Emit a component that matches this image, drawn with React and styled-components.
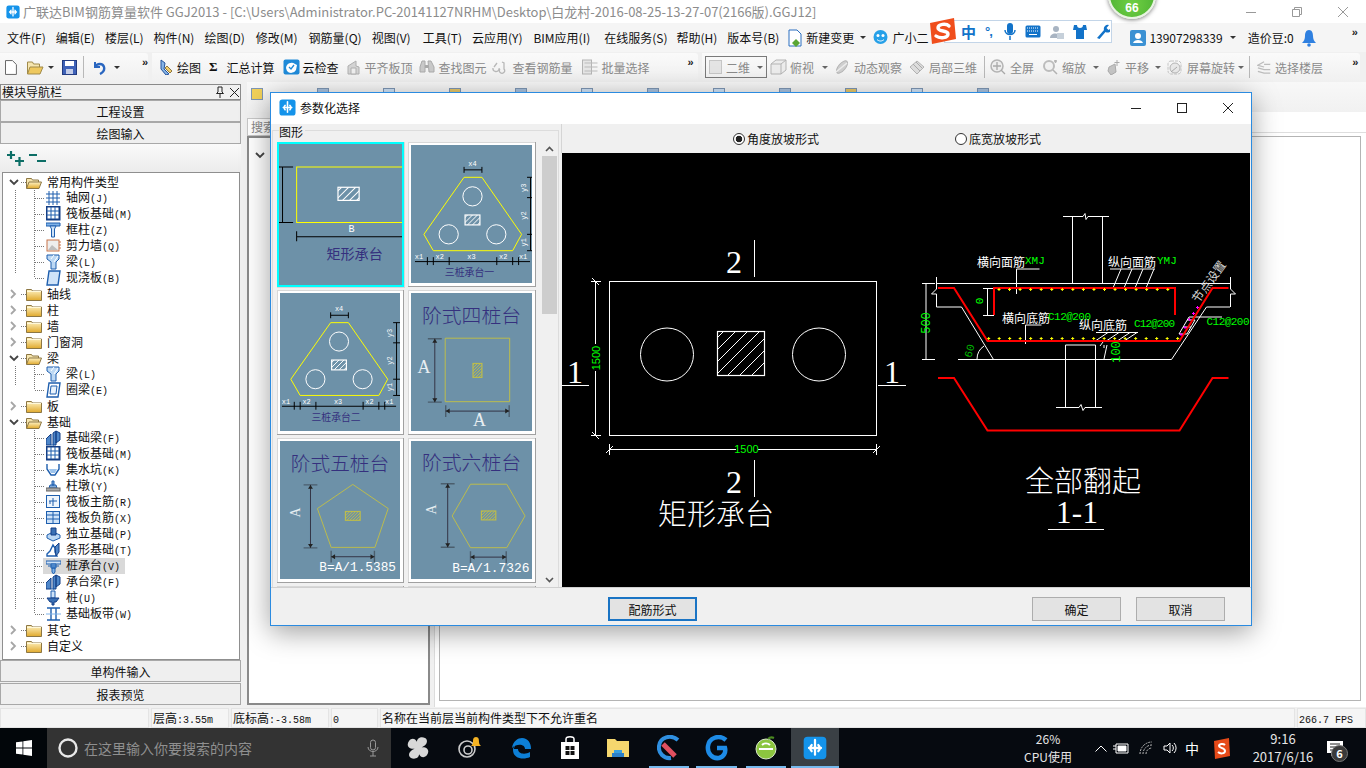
import React from "react";
import styled, { createGlobalStyle } from "styled-components";

const SANS = `"Noto Sans CJK SC", "Noto Sans", sans-serif`;
const MONO = `"Liberation Mono", "Noto Sans CJK SC", monospace`;
const SERIF = `"Liberation Serif", serif`;

const GlobalStyle = createGlobalStyle`
  html, body { margin: 0; padding: 0; overflow: hidden; background: #f0f0f0; }
  body { font-family: ${SANS}; font-size: 12px; color: #111; }
`;

const Screen = styled.div`
  position: relative;
  width: 1366px;
  height: 768px;
  overflow: hidden;
  display: flex;
  flex-direction: column;
  background: #f0f0f0;
`;

/* title bar */
const TitleBar = styled.div`
  height: 23px;
  background: #fff;
  display: flex;
  align-items: center;
  padding-left: 6px;
  gap: 3px;
  color: #8c8c8c;
  line-height: 1;
`;
const TitleText = styled.span`
  flex: 1;
  white-space: nowrap;
  font-size: 13px;
`;
const WinButtons = styled.div`
  display: flex;
  align-items: center;
`;
const WinButton = styled.div`
  width: 46px;
  height: 20px;
  display: flex;
  align-items: center;
  justify-content: center;
`;

/* menu */
const MenuBar = styled.div`
  height: 29px;
  background: #f5f5f5;
  display: flex;
  align-items: center;
  padding-left: 7px;
  white-space: nowrap;
`;
const MenuItem = styled.span`
  margin-left: ${(p) => p.$ml ?? 10}px;
  display: inline-flex;
  align-items: center;
  gap: 3px;
  color: #111;
`;

/* tool bar */
const ToolBar = styled.div`
  height: 30px;
  background: #f0f0f0;
  display: flex;
  align-items: center;
  gap: 4px;
  white-space: nowrap;
`;
const ToolBand = styled.div`
  width: ${(p) => p.$w}px;
  height: 29px;
  display: flex;
  align-items: center;
  background: linear-gradient(#fafafa, #f0f0f0);
  border-radius: 0 3px 3px 0;
  padding-left: ${(p) => p.$pad || 0}px;
  box-sizing: border-box;
`;
const ToolItem = styled.span`
  margin-left: ${(p) => p.$ml || 0}px;
  display: inline-flex;
  align-items: center;
  gap: ${(p) => p.$gap ?? 3}px;
  color: ${(p) => (p.$off ? "#8a8a8a" : "#111")};
`;
const Sigma = styled.strong`
  font-family: ${SERIF};
  font-size: 13px;
`;
const ToolSep = styled.span`
  width: 1px;
  height: 22px;
  margin-left: ${(p) => p.$ml || 0}px;
  background: #b8b8b8;
`;
const Caret = styled.span`
  margin-left: ${(p) => p.$ml || 0}px;
  width: 0;
  height: 0;
  border-left: 3px solid transparent;
  border-right: 3px solid transparent;
  border-top: 3px solid ${(p) => p.$color || "#333"};
`;
const More = styled.span`
  margin-left: ${(p) => p.$ml || 0}px;
  font-family: "Liberation Sans", sans-serif;
  font-weight: 700;
  font-size: 11px;
  line-height: 1;
  margin-top: -10px;
  color: #222;
`;
const Combo = styled.div`
  margin-left: ${(p) => p.$ml || 0}px;
  width: 62px;
  height: 22px;
  box-sizing: border-box;
  border: 1px solid #7a7a7a;
  display: flex;
  align-items: center;
  padding: 0 3px;
  gap: 4px;
  color: #8a8a8a;
`;
const ComboSwatch = styled.span`
  width: 13px;
  height: 12px;
  background: #e4e4e4;
  border: 1px solid #c6c6c6;
`;

/* main row */
const Main = styled.div`
  height: 626px;
  display: flex;
`;

/* module nav */
const Nav = styled.div`
  width: 241px;
  padding-top: 2px;
  box-sizing: border-box;
  display: flex;
  flex-direction: column;
  flex: none;
`;
const NavTitle = styled.div`
  height: 14px;
  border: 1px solid #8a8a8a;
  display: flex;
  align-items: center;
  padding: 0 1px;
  font-size: 12px;
  line-height: 1;
  gap: 5px;
  flex: none;
`;
const NavTitleText = styled.span`
  flex: 1;
`;
const NavButton = styled.div`
  height: 20px;
  margin-top: ${(p) => p.$mt ?? 0}px;
  border: 1px solid #a8a8a8;
  background: #efefef;
  display: flex;
  align-items: center;
  justify-content: center;
  font-size: 12px;
  flex: none;
`;
const TreeTools = styled.div`
  height: 28px;
  display: flex;
  align-items: center;
  padding-left: 7px;
  gap: 5px;
  background: linear-gradient(#fafafa, #ececec);
  flex: none;
`;
const Tree = styled.div`
  height: 488px;
  margin: 0 1px 0 2px;
  border: 1px solid #8f8f8f;
  background: #fff;
  padding-top: 1px;
  box-sizing: border-box;
  overflow: hidden;
  flex: none;
`;
const TreeGroup = styled.div`
  background: ${(p) =>
    p.$open
      ? "repeating-linear-gradient(#777 0 1px, transparent 1px 2px) 12px 12px / 1px calc(100% - 24px) no-repeat"
      : "none"};
`;
const GroupRow = styled.div`
  height: 16px;
  display: flex;
  align-items: center;
  padding-left: 5px;
  font-size: 12px;
  line-height: 16px;
`;
const Expander = styled.span`
  width: 11px;
  height: 16px;
  display: flex;
  align-items: center;
  justify-content: center;
  background: #fff;
`;
const Dots = styled.span`
  width: 5px;
  margin-left: 2px;
  height: 1px;
  background: repeating-linear-gradient(90deg, #777 0 1px, transparent 1px 2px);
`;
const GroupLabel = styled.span`
  margin-left: 5px;
`;
const ChildRow = styled.div`
  height: 16px;
  display: flex;
  align-items: center;
  padding-left: 40px;
  background:
    repeating-linear-gradient(#777 0 1px, transparent 1px 2px) 31px 0 / 1px ${(p) => (p.$last ? "8px" : "16px")} no-repeat,
    repeating-linear-gradient(90deg, #777 0 1px, transparent 1px 2px) 32px 8px / 10px 1px no-repeat;
`;
const ChildBody = styled.span`
  display: inline-flex;
  align-items: center;
  gap: 5px;
  height: 16px;
  line-height: 16px;
  padding: 0 5px 0 3px;
  background: ${(p) => (p.$selected ? "#d9d9d9" : "transparent")};
  font-size: 12px;
  white-space: nowrap;
`;
const Code = styled.span`
  font-family: ${MONO};
  font-size: 10px;
`;

/* work area behind dialog */
const Work = styled.div`
  flex: 1;
  padding-left: 6px;
  display: flex;
  flex-direction: column;
  min-width: 0;
`;
const TabStrip = styled.div`
  height: 30px;
  display: flex;
  gap: 54px;
  align-items: flex-start;
  padding: 6px 0 0 4px;
  box-sizing: border-box;
  background: linear-gradient(#f8f8f8, #f1f1f1);
  flex: none;
`;
const TabIcon = styled.span`
  width: 10px;
  height: 10px;
  background: ${(p) => p.$color};
  border: 1px solid #7f97b5;
`;
const Panes = styled.div`
  flex: 1;
  display: flex;
  gap: 4px;
  min-height: 0;
`;
const ListPane = styled.div`
  width: 183px;
  padding: 6px 0 3px;
  box-sizing: border-box;
  display: flex;
  flex-direction: column;
`;
const SearchBox = styled.div`
  height: 16px;
  border: 1px solid #c8c8c8;
  background: #fff;
  padding-left: 3px;
  color: #888;
  line-height: 16px;
  flex: none;
`;
const ListBody = styled.div`
  flex: 1;
  border: 2px solid #8a8a8a;
  background: #fff;
  padding: 7px 0 0 6px;
`;
const ViewPane = styled.div`
  flex: 1;
  background: #fff;
  display: flex;
  flex-direction: column;
  padding: 20px 5px 6px 4px;
  margin-bottom: 1px;
  border-left: 1px solid #dcdcdc;
  box-sizing: border-box;
`;
const ViewRule = styled.div`
  height: 1px;
  background: #dedede;
  margin: 0 -5px 3px -4px;
  flex: none;
`;
const ViewInner = styled.div`
  flex: 1;
  border: 1px solid #b4b4b4;
`;

/* status bar */
const StatusBar = styled.div`
  height: 20px;
  display: flex;
  gap: 2px;
  background: #f0f0f0;
  box-sizing: border-box;
  flex: none;
`;
const StatusCell = styled.div`
  width: ${(p) => p.$w}px;
  flex: ${(p) => (p.$grow ? 1 : "none")};
  background: #f5f5f5;
  border: 1px solid #e4e4e4;
  box-sizing: border-box;
  padding-left: 1px;
  line-height: 18px;
  font-size: 12px;
  white-space: nowrap;
`;

/* task bar */
const TaskBar = styled.div`
  height: 40px;
  background: #060a10;
  display: flex;
  align-items: stretch;
  color: #fff;
  flex: 1;
`;
const StartButton = styled.div`
  width: 47px;
  display: flex;
  align-items: center;
  justify-content: center;
  background: #02060a;
  flex: none;
`;
const SearchPill = styled.div`
  width: 344px;
  background: #333;
  display: flex;
  align-items: center;
  padding: 0 12px 0 10px;
  gap: 5px;
  color: #8f8f8f;
  font-size: 14px;
  box-sizing: border-box;
  flex: none;
`;
const SearchHint = styled.span`
  flex: 1;
`;
const TaskIcons = styled.div`
  display: flex;
  margin-left: 2px;
`;
const TaskSlot = styled.div`
  width: ${(p) => p.$w || 50}px;
  margin-left: ${(p) => p.$ml || 0}px;
  display: flex;
  align-items: center;
  justify-content: center;
  background: ${(p) => (p.$active ? "#3a4045" : "transparent")};
  box-sizing: border-box;
  border-bottom: 2px solid ${(p) => (p.$run ? "#76b9ed" : "transparent")};
  border-top: 2px solid transparent;
`;
const Tray = styled.div`
  margin-left: auto;
  display: flex;
  align-items: center;
`;
const Stacked = styled.div`
  width: ${(p) => p.$w}px;
  margin-left: ${(p) => p.$ml || 0}px;
  margin-right: ${(p) => p.$mr || 0}px;
  text-align: center;
  font-size: ${(p) => p.$size || 12}px;
  line-height: 18px;
  color: #e6e6e6;
  white-space: nowrap;
`;
const TrayIcon = styled.span`
  width: ${(p) => p.$w || 24}px;
  display: flex;
  justify-content: center;
  align-items: center;
  font-size: ${(p) => p.$size || 13}px;
  color: #fff;
`;
const BadgeWrap = styled.span`
  position: relative;
  width: 42px;
  height: 24px;
  display: flex;
  align-items: center;
  justify-content: center;
  margin-right: 10px;
`;
const CountBadge = styled.span`
  position: absolute;
  right: 8px;
  bottom: -2px;
  width: 15px;
  height: 15px;
  border-radius: 50%;
  background: #3a3a3a;
  border: 1px solid #777;
  font-size: 11px;
  font-weight: 700;
  display: flex;
  align-items: center;
  justify-content: center;
  line-height: 1;
`;

/* floating bits */
const GreenBall = styled.div`
  position: absolute;
  left: 1108px;
  top: -29px;
  width: 44px;
  height: 44px;
  border-radius: 50%;
  background: radial-gradient(circle at 50% 70%, #6fcf43, #3ea52c);
  border: 2px solid #e9f3e3;
  box-shadow: 0 1px 4px rgba(0, 0, 0, 0.5);
  display: flex;
  align-items: flex-end;
  justify-content: center;
  color: #fff;
  font-weight: 700;
  font-size: 12px;
  line-height: 17px;
  font-family: "Liberation Sans", sans-serif;
`;
const SogouBar = styled.div`
  position: absolute;
  left: 944px;
  top: 20px;
  width: 168px;
  height: 23px;
  background: #fff;
  border: 1px solid #c3d5e8;
  box-sizing: border-box;
  display: flex;
  align-items: center;
  padding-left: 16px;
  gap: 9px;
  color: #1273c9;
  font-weight: 700;
  font-size: 15px;
`;
const SogouMarks = styled.span`
  width: 10px;
  font-size: 13px;
  letter-spacing: -1px;
  font-family: "Liberation Sans", sans-serif;
`;
const SogouLogo = styled.svg`
  position: absolute;
  left: 929px;
  top: 18px;
`;

/* dialog */
const Dialog = styled.div`
  position: absolute;
  left: 270px;
  top: 92px;
  width: 982px;
  height: 534px;
  box-sizing: border-box;
  border: 1px solid #2b8be0;
  box-shadow: 0 6px 26px rgba(0, 0, 0, 0.38);
  background: #f0f0f0;
  display: flex;
  flex-direction: column;
  z-index: 2;
`;
const DialogTitle = styled.div`
  height: 29px;
  padding: 0 0 2px 8px;
  background: #fff;
  display: flex;
  align-items: center;
  gap: 4px;
  flex: none;
`;
const DialogTitleText = styled.span`
  flex: 1;
  font-size: 12px;
`;
const DialogBody = styled.div`
  height: 463px;
  display: flex;
  flex: none;
  overflow: hidden;
`;
const Shapes = styled.div`
  width: 290px;
  flex: none;
  box-sizing: border-box;
  padding: 6px 2px 0 1px;
  display: flex;
  flex-direction: column;
`;
const ShapeFrame = styled.div`
  position: relative;
  flex: 1;
  border: 1px solid #dcdcdc;
  border-bottom: 0;
  display: flex;
  min-height: 0;
  padding: 11px 1px 0 4px;
`;
const ShapeCaption = styled.span`
  position: absolute;
  left: 6px;
  top: -6px;
  background: #f0f0f0;
  padding-right: 2px;
  font-size: 12px;
  line-height: 14px;
`;
const CardGrid = styled.div`
  width: 262px;
  display: grid;
  grid-template-columns: 127px 128px;
  grid-auto-rows: 145px;
  column-gap: 4px;
  row-gap: 3px;
  overflow: hidden;
  flex: none;
`;
const Card = styled.div`
  box-sizing: border-box;
  padding: ${(p) => (p.$selected ? "2px" : "3px")};
  background: ${(p) => (p.$selected ? "#00ffff" : "#fff")};
  border-right: ${(p) => (p.$selected ? "0" : "1px solid #a0a0a0")};
  border-bottom: ${(p) => (p.$selected ? "0" : "1px solid #a0a0a0")};
  box-shadow: ${(p) => (p.$selected ? "0 0 0 1px #d8d8d8" : "inset 1px 1px 0 #d8d8d8")};
`;
const Thumb = styled.svg`
  display: block;
  width: 100%;
  height: 100%;
  background: #6d91a8;
`;
const ScrollBar = styled.div`
  width: 15px;
  margin-left: 3px;
  display: flex;
  flex-direction: column;
  align-items: center;
  flex: none;
`;
const ScrollArrow = styled.div`
  height: 14px;
  display: flex;
  align-items: center;
  flex: none;
`;
const ScrollThumb = styled.div`
  width: 15px;
  height: 158px;
  background: #cdcdcd;
  flex: none;
`;
const ScrollGap = styled.div`
  flex: 1;
`;
const Preview = styled.div`
  flex: 1;
  display: flex;
  flex-direction: column;
  min-width: 0;
`;
const RadioBar = styled.div`
  height: 29px;
  display: flex;
  align-items: center;
  padding-left: 171px;
  gap: 136px;
  box-sizing: border-box;
  border-left: 1px solid #d5d5d5;
  flex: none;
`;
const RadioLabel = styled.label`
  display: inline-flex;
  align-items: center;
  gap: 2px;
  font-size: 12px;
`;
const RadioDot = styled.span`
  width: 12px;
  height: 12px;
  border-radius: 50%;
  border: 1px solid #333;
  box-sizing: border-box;
  background: ${(p) => (p.$on ? "radial-gradient(circle, #222 0 3px, #fff 3.6px)" : "#fff")};
`;
const Canvas = styled.svg`
  display: block;
  width: 688px;
  height: 434px;
  margin-left: 1px;
  background: #000;
`;
const DialogFooter = styled.div`
  flex: 1;
  display: flex;
  align-items: center;
  padding: 5px 26px 0 337px;
  border-top: 1px solid #d0d0d0;
`;
const DialogButton = styled.div`
  width: 89px;
  height: 24px;
  box-sizing: border-box;
  border: ${(p) => (p.$primary ? "2px solid #1a74c4" : "1px solid #adadad")};
  background: #e3e3e3;
  display: flex;
  align-items: center;
  justify-content: center;
  font-size: 12px;
  margin-left: ${(p) => p.$ml || 0}px;
`;

/* svg text */
const SvgText = styled.text`
  font-family: ${(p) => p.$font || SANS};
  font-size: ${(p) => p.$size}px;
  font-weight: ${(p) => p.$weight || 400};
  fill: ${(p) => p.$color || "#fff"};
  text-anchor: ${(p) => p.$anchor || "middle"};
  dominant-baseline: central;
`;

/* ---------- icons ---------- */
const AppIcon = ({ size = 17 }) => (
  <svg width={size} height={size} viewBox="0 0 18 18">
    <rect x="0.5" y="0.5" width="17" height="17" rx="3" fill="#1493ea" />
    <path d="M9 3v11M4.500 9h4M6.500 6.800a3 3 0 0 0 0 4.600M9 9h4.500M11.500 6.800a3 3 0 0 1 0 4.600" stroke="#fff" strokeWidth="1.7" fill="none" strokeLinecap="round" />
  </svg>
);
const Chevron = ({ open }) =>
  open ? (
    <svg width="10" height="7" viewBox="0 0 10 7"><path d="M1 1l4 4 4-4" stroke="#444" strokeWidth="1.8" fill="none" /></svg>
  ) : (
    <svg width="7" height="10" viewBox="0 0 7 10"><path d="M1 1l4 4-4 4" stroke="#a6a6a6" strokeWidth="1.8" fill="none" /></svg>
  );
const Folder = ({ open }) => (
  <svg width="16" height="13" viewBox="0 0 16 13">
    <defs>
      <linearGradient id="fld" x1="0" y1="0" x2="0" y2="1">
        <stop offset="0" stopColor="#fff3c4" />
        <stop offset="1" stopColor="#e0a92c" />
      </linearGradient>
    </defs>
    {open ? (
      <>
        <path d="M0.5 12V2.500h5l1 1.500h6v2" fill="#f6e6b0" stroke="#8d7743" />
        <path d="M3 6h12.500L13 12.500H0.5z" fill="url(#fld)" stroke="#8d7743" />
      </>
    ) : (
      <>
        <path d="M0.5 12.500V1.500h5l1 1.500h9v9.500z" fill="url(#fld)" stroke="#8d7743" />
        <path d="M1 3.500h14" stroke="#fff8d8" />
      </>
    )}
  </svg>
);

const B = "#1f5fae";
const TREE_ICONS = {
  grid: <path d="M3 1v14M7 1v14M11 1v14M0 4h14M0 8h14M0 12h14" stroke={B} strokeWidth="1" fill="none" />,
  raft: (
    <>
      <rect x="0.5" y="0.5" width="13" height="13" fill="none" stroke="#153f86" strokeWidth="2" />
      <path d="M5 1v12M9 1v12M1 5h12M1 9h12" stroke={B} />
    </>
  ),
  column: (
    <>
      <path d="M0 1h14v3H0z" fill="#7fb2e8" stroke={B} />
      <path d="M4 4l1.500 3v8h3V7L10 4z" fill="#cfe3f8" stroke={B} />
    </>
  ),
  wall: (
    <>
      <rect x="1" y="2" width="12" height="11" fill="#eee" stroke="#c8744a" />
      <path d="M2 12l4-5 6 5z" fill="#aaa" opacity=".7" />
      <path d="M13 4h2M13 7h2M13 10h2" stroke="#c8744a" />
    </>
  ),
  beam: (
    <>
      <path d="M1 1h12v4l-3 3v7H5V8L1 5z" fill="#bcd8f4" stroke={B} />
      <path d="M5 5l3-4M8 8l4-6" stroke="#fff" />
    </>
  ),
  slab: <path d="M3 1h11l-2 14H1z" fill="#cfe3f8" stroke={B} strokeWidth="1.4" />,
  ring: (
    <>
      <path d="M3 1h11l-2 14H1z" fill="none" stroke={B} strokeWidth="1.4" />
      <path d="M5 4h6l-1 8H4z" fill="#eaf3fc" stroke={B} />
    </>
  ),
  fbeam: (
    <>
      <path d="M0 15V9l5-5v11zM7 15V3l3-2v14zM10 1l4 2v7l-4 3z" fill="#4d86c9" stroke="#153f86" />
      <path d="M5 15h3" stroke={B} />
    </>
  ),
  pit: (
    <>
      <path d="M1 2v5l4 6h4l4-6V2" fill="none" stroke={B} strokeWidth="1.4" />
      <path d="M3 7h8l-2 4H5z" fill="#9cc3ec" />
    </>
  ),
  pier: (
    <>
      <path d="M6 3h2v4H6zM4 7h6l1 3H3z" fill="#7fa9d9" stroke={B} />
      <rect x="0" y="10" width="14" height="3" fill="#aaa" stroke="#666" />
    </>
  ),
  rmain: (
    <>
      <rect x="0.5" y="1.500" width="13" height="12" fill="#eef5fc" stroke={B} />
      <path d="M7 4v8M3 7h8M4 7v3" stroke={B} fill="none" />
    </>
  ),
  rneg: (
    <>
      <rect x="0.5" y="1.500" width="13" height="12" fill="#cfe3f8" stroke={B} />
      <path d="M7 1v13M1 5h12M1 9h12" stroke={B} />
    </>
  ),
  iso: (
    <>
      <path d="M1 9l6-3 7 3v3l-7 3-6-3z" fill="#bcd8f4" stroke={B} />
      <path d="M5 2h5v7H5z" fill="#3a70b4" stroke="#153f86" />
    </>
  ),
  strip: (
    <>
      <path d="M1 14h10l-2-4V6l-2-3-3 6-3 3z" fill="#fff" stroke={B} strokeWidth="1.4" />
      <path d="M9 5l4-4v9l-3 4z" fill="#4d86c9" stroke="#153f86" />
    </>
  ),
  cap: (
    <>
      <path d="M0 3h15v3H0z" fill="#cfe3f8" stroke={B} />
      <path d="M2 8h11M5 6h5v4H5zM6 10h3v4l-1.500 2L6 14z" fill="#7fb2e8" stroke={B} />
    </>
  ),
  pile: (
    <>
      <path d="M5 1h4v7H5z" fill="#cfe3f8" stroke={B} />
      <path d="M1 8h12l-3 4H8v3H6v-3H4z" fill="#3a70b4" stroke="#153f86" />
    </>
  ),
  band: (
    <>
      <path d="M1 2h13M1 14h13M5 2v12M10 2v12" stroke={B} strokeWidth="1.4" />
      <path d="M0 8h15" stroke="#7fb2e8" />
    </>
  ),
};
const TreeIcon = ({ name }) => (
  <svg width="15" height="16" viewBox="0 0 15 16">{TREE_ICONS[name]}</svg>
);

const TOOL_ICONS = {
  pen: (
    <>
      <path d="M3 1l4 3-1 6 5 5-3 1-5-6z" fill="#86b4e6" stroke="#25539b" />
      <path d="M9 7l5 5-2 2-5-5z" fill="#f2cf6c" stroke="#8d7743" />
    </>
  ),
  cloud: (
    <>
      <rect x="0.5" y="0.5" width="16" height="15" rx="2" fill="#1f8ad8" />
      <path d="M3 9a5.500 5.500 0 0 1 9-4l2 1-1 5a5.500 5.500 0 0 1-9 1z" fill="#fff" />
      <path d="M6 8l2 2 3-4" stroke="#1f8ad8" fill="none" strokeWidth="1.3" />
    </>
  ),
  level: (
    <>
      <path d="M3 15V7l8-5v5l3 1v7z" fill="#d4d4d4" stroke="#b0b0b0" />
      <path d="M6 9h5v6H6z" fill="#eee" stroke="#b0b0b0" />
    </>
  ),
  find: (
    <>
      <path d="M1 8l2-6h3v11H1zM9 2h3l3 6v5h-5z" fill="#c9c9c9" stroke="#aaa" />
      <rect x="6" y="6" width="3" height="3" fill="#aaa" />
    </>
  ),
  glasses: <path d="M2 9a3 3 0 1 0 6 1h1M11 3l2 1v6a2.600 2.600 0 1 1-4 0M3 8l3-4" fill="none" stroke="#b8b8b8" strokeWidth="1.3" />,
  batch: (
    <>
      <rect x="1" y="1" width="9" height="14" fill="#e6e6e6" stroke="#b4b4b4" />
      <path d="M3 4h13M3 8h13M3 12h13" stroke="#bbb" />
    </>
  ),
  box: (
    <>
      <path d="M1 5l5-4h10v10l-5 4H1z" fill="#ececec" stroke="#b4b4b4" />
      <path d="M1 5h10v10M11 5l5-4" fill="none" stroke="#b4b4b4" />
    </>
  ),
  orbit: (
    <>
      <ellipse cx="8" cy="8" rx="3.500" ry="7.500" transform="rotate(40 8 8)" fill="#cfcfcf" stroke="#b4b4b4" />
      <path d="M2 13l11-9" stroke="#ededed" strokeWidth="1.5" />
    </>
  ),
  local: (
    <>
      <path d="M1 8l7-6 7 6-7 7z" fill="#ddd" stroke="#b4b4b4" />
      <path d="M4 5l7 7M7 3l6 6" stroke="#aaa" />
    </>
  ),
  zoomAll: (
    <>
      <circle cx="7" cy="7" r="6" fill="#eee" stroke="#b4b4b4" strokeWidth="1.5" />
      <path d="M7 3v8M3 7h8M11 11l4 4" stroke="#aaa" strokeWidth="1.3" />
    </>
  ),
  zoom: (
    <>
      <circle cx="7" cy="7" r="5" fill="#f2f2f2" stroke="#bdbdbd" strokeWidth="2" />
      <path d="M11 11l4 4M12 2h3M13.500 1v3" stroke="#b4b4b4" strokeWidth="1.5" />
    </>
  ),
  pan: (
    <>
      <path d="M4 8l6-3 1 8-5 3-3-4z" fill="#c4c4c4" stroke="#aaa" />
      <path d="M12 1v6M9.500 3.500h5" stroke="#aaa" />
    </>
  ),
  rotate: (
    <>
      <rect x="1" y="2" width="13" height="13" rx="3" fill="none" stroke="#c4c4c4" strokeDasharray="3 1" />
      <circle cx="8" cy="9" r="5" fill="#e8e8e8" stroke="#b4b4b4" />
      <path d="M4 13l6-5" stroke="#aaa" />
    </>
  ),
  floors: <path d="M8 2L1 6l7 2M1 9l7 2h7M1 13l7 2h7M8 5h7" fill="none" stroke="#bcbcbc" strokeWidth="1.4" />,
};
const ToolIcon = ({ name, w = 17 }) => (
  <svg width={w} height="16" viewBox="0 0 17 16">{TOOL_ICONS[name]}</svg>
);

/* ---------- thumbnails ---------- */
const INK = "#000";
const TITLE = "#35307e";
const OLIVE = "#bcbc4c";

const Hatch = ({ id, x, y, w, h, color = "#fff", step = 6, width = 1, fill = "none" }) => {
  const lines = [];
  for (let d = step / 2; d < w + h; d += step) {
    lines.push(<line key={d} x1={x + d - h} y1={y + h} x2={x + d} y2={y} />);
  }
  return (
    <g>
      <clipPath id={id}>
        <rect x={x} y={y} width={w} height={h} />
      </clipPath>
      <g clipPath={`url(#${id})`} stroke={color} strokeWidth={width}>{lines}</g>
      <rect x={x} y={y} width={w} height={h} fill={fill} stroke={color} strokeWidth={width + 0.2} />
    </g>
  );
};

const RectThumb = () => (
  <Thumb viewBox="0 0 122 139">
    <path d="M122 22.500H17.500v55H122" fill="none" stroke="#ffff00" strokeWidth="1" />
    <Hatch id="h1" x={58.5} y={42.5} w={21} h={13} step={7} />
    <path d="M0 22.500h14M3.500 22.500v55M0 77.500h14M17.500 86v10M17.500 91.500H122" stroke={INK} fill="none" />
    <SvgText x={72} y={84} $size={10} $font={MONO}>B</SvgText>
    <SvgText x={75} y={108} $size={14} $color={TITLE}>矩形承台</SvgText>
  </Thumb>
);

const TriThumb = ({ id, title, shift }) => (
  <Thumb viewBox="0 0 122 139">
    <g transform={shift}>
      <path d="M53.500 32.500h18l40 57.500-9 16.500h-80l-9.500-16.500z" fill="none" stroke="#ffff00" />
      <circle cx="62" cy="51.700" r="9.700" fill="none" stroke="#fff" />
      <circle cx="38" cy="90" r="9.700" fill="none" stroke="#fff" />
      <circle cx="86" cy="90" r="9.700" fill="none" stroke="#fff" />
      <Hatch id={id} x={54.5} y={70.5} w={15} h={10} step={5} />
      <path d="M53.500 22v6M71.500 22v6M53.500 25h18M117 32.500h7M120.500 32.500v74M117 53h7M117 90h7M117 106.500h7M4 117.500h116M16.500 113v8M22.500 113v8M38.500 113v8M86.500 113v8M102.500 113v8M108.500 113v8" stroke={INK} fill="none" />
      <SvgText x={62} y={19} $size={7} $font={MONO}>x4</SvgText>
      <SvgText x={114} y={43} $size={7} $font={MONO} transform="rotate(-90 114 43)">y3</SvgText>
      <SvgText x={114} y={71} $size={7} $font={MONO} transform="rotate(-90 114 71)">y2</SvgText>
      <SvgText x={114} y={98} $size={7} $font={MONO} transform="rotate(-90 114 98)">y1</SvgText>
      <SvgText x={8} y={113} $size={7} $font={MONO}>x1</SvgText>
      <SvgText x={29} y={113} $size={7} $font={MONO}>x2</SvgText>
      <SvgText x={61} y={113} $size={7} $font={MONO}>x3</SvgText>
      <SvgText x={93} y={113} $size={7} $font={MONO}>x2</SvgText>
      <SvgText x={113} y={113} $size={7} $font={MONO}>x1</SvgText>
      <SvgText x={59} y={128} $size={10} $color={TITLE}>{title}</SvgText>
    </g>
  </Thumb>
);

const Arrow = ({ x1, y1, x2, y2 }) => {
  const horizontal = y1 === y2;
  const head = horizontal
    ? `M${x1} ${y1}l4 -2.500v5zM${x2} ${y2}l-4 -2.500v5z`
    : `M${x1} ${y1}l-2.500 4h5zM${x2} ${y2}l-2.500 -4h5z`;
  return (
    <>
      <line x1={x1} y1={y1} x2={x2} y2={y2} stroke="#334" strokeWidth="1" />
      <path d={head} fill="#222" />
    </>
  );
};

const StepThumb = ({ id, title, titleY, shape, hatch, dim, a, note }) => (
  <Thumb viewBox="0 0 122 139">
    <SvgText x={61} y={titleY} $size={20} $weight={300} $color={TITLE}>{title}</SvgText>
    <path d={shape} fill="none" stroke={OLIVE} />
    <Hatch id={id} {...hatch} color={OLIVE} step={3} />
    <path d={`M${dim.vx - 7} ${dim.top}h14M${dim.vx - 7} ${dim.bottom}h14M${dim.left} ${dim.hy - 6}v12M${dim.right} ${dim.hy - 6}v12`} stroke="#4b5e6d" fill="none" strokeWidth="1.4" />
    <Arrow x1={dim.vx} y1={dim.top} x2={dim.vx} y2={dim.bottom} />
    <Arrow x1={dim.left} y1={dim.hy} x2={dim.right} y2={dim.hy} />
    <SvgText x={a.x} y={a.y} $size={a.size || 18} $font={SERIF} $color="#e8eef2" transform={a.rotate ? `rotate(-90 ${a.x} ${a.y})` : undefined}>A</SvgText>
    {a.second && <SvgText x={69} y={128} $size={18} $font={SERIF} $color="#e8eef2">A</SvgText>}
    {note && <SvgText x={note.x} y={128} $size={13} $font={MONO} $anchor="start">{note.text}</SvgText>}
  </Thumb>
);

const CARDS = [
  <RectThumb key="a" />,
  <TriThumb key="b" id="h2" title="三桩承台一" />,
  <TriThumb key="c" id="h3" title="三桩承台二" shift="translate(-2 -3)" />,
  <StepThumb
    key="d"
    id="h4"
    title="阶式四桩台"
    titleY={22}
    shape="M34.500 45.500h65v64h-65z"
    hatch={{ x: 62.5, y: 71, w: 9, h: 14 }}
    dim={{ vx: 24, top: 46, bottom: 110, hy: 119, left: 35, right: 99 }}
    a={{ x: 13, y: 75, second: true }}
  />,
  <StepThumb
    key="e"
    id="h5"
    title="阶式五桩台"
    titleY={21}
    shape="M74 43.500L110 68 96.500 107.500H52L38 68z"
    hatch={{ x: 66.5, y: 71, w: 15, h: 9 }}
    dim={{ vx: 31, top: 44, bottom: 108, hy: 117, left: 52, right: 96 }}
    a={{ x: 16, y: 72, size: 14, rotate: true }}
    note={{ x: 40, text: "B=A/1.5385" }}
  />,
  <StepThumb
    key="f"
    id="h6"
    title="阶式六桩台"
    titleY={21}
    shape="M60 43.500h36.500L115 75.500 96.500 107.500H60L41.500 75.500z"
    hatch={{ x: 71, y: 70.5, w: 14.5, h: 9 }}
    dim={{ vx: 37, top: 43, bottom: 107, hy: 117, left: 60, right: 96 }}
    a={{ x: 21, y: 69, size: 14, rotate: true }}
    note={{ x: 41.5, text: "B=A/1.7326" }}
  />,
];

/* ---------- big preview ---------- */
const GREEN = "#00ff00";
const range = (from, to, step) => {
  const out = [];
  for (let v = from; v <= to; v += step) out.push(v);
  return out;
};
const Plus = ({ x, y, color }) => (
  <path d={`M${x - 1.5} ${y}h3M${x} ${y - 1.5}v3`} stroke={color} strokeWidth="1" />
);

const PreviewDrawing = () => (
  <Canvas viewBox="562 153 688 434">
    {/* plan */}
    <g fill="none" stroke="#fff" strokeWidth="1">
      <rect x="609.500" y="281.500" width="267" height="154" />
      <circle cx="667" cy="354.500" r="26.500" />
      <circle cx="819" cy="354.500" r="26.500" />
      <path d="M754.500 240v37M754.500 460v37M562 385.500h27M878 385.500h28" />
      <path d="M595.500 281v155M591 281.500h10M591 435.500h10M592 278l7 7M592 432l7 7" />
      <path d="M609 449.500h267M609.500 444v11M876.500 444v11M606 453l7-7M873 453l7-7" />
    </g>
    <Hatch id="p0" x={717.5} y={331.5} w={47} h={44} step={12} />
    <rect x="736" y="443" width="22" height="12" fill="#000" />
    <rect x="590" y="344" width="12" height="27" fill="#000" />
    <SvgText x={746.5} y={449} $size={11} $font={`"Liberation Sans", sans-serif`} $color={GREEN}>1500</SvgText>
    <SvgText x={596} y={358} $size={11} $font={`"Liberation Sans", sans-serif`} $color={GREEN} transform="rotate(-90 596 358)">1500</SvgText>
    <SvgText x={734} y={262} $size={32} $font={SERIF}>2</SvgText>
    <SvgText x={734} y={482} $size={32} $font={SERIF}>2</SvgText>
    <SvgText x={575} y={372} $size={32} $font={SERIF}>1</SvgText>
    <SvgText x={892} y={372} $size={32} $font={SERIF}>1</SvgText>
    <SvgText x={716} y={512} $size={29} $weight={300}>矩形承台</SvgText>

    {/* section */}
    <g fill="none" stroke="#fff" strokeWidth="1">
      <path d="M1072.500 216v67M1102.500 216v67M1063 216.500h20l2-3 1 6 2-3h21" />
      <path d="M936 283.500h295" />
      <path d="M936.500 277v12l-5 5h5v13h25l32 52.500M958 359.500h213.500l35-52.500h23.500M1230.500 277v12l5 5h-5v13" />
      <path d="M1065.500 407v-62h30v62M1056 407.500h23l2-3 2 6 2-3h17" />
      <path d="M926 283v76M922 283.500h13M922 359.500h13" />
      <path d="M987.500 288v27M983 288.500h11M983 315.500h11" />
      <path d="M977 359a16 16 0 0 1 7-13" />
      <path d="M1016.500 294v-25h23M1025.500 344v-19h16" />
      <path d="M1110 269h45M1121 269l-8 19M1132 269l-8 19M1143 269l-8 19M1154 269l-8 19" />
      <path d="M1096 332.500h42M1108 332.500l-12 8M1119 332.500l-12 8M1130 332.500l-12 8M1137 332.500l-12 8" />
      <path d="M1104 345v3M1103 342l-3 4M1104 359l3-14" />
      <path d="M1189 317h33M1187 320h8M1183 327h8M1179 334h8M1189 317l-10 17M1195 320l-8 14" />
    </g>
    <g fill="none" stroke="#ff0000" strokeWidth="2">
      <path d="M938 288h16l33.500 53h192l33-53h16" />
      <path d="M994 315v-27h181v27" />
      <path d="M938 378h16l33.500 52.500h192l33-52.500h16" />
    </g>
    {range(999, 1172, 10.55).map((x) => <Plus key={x} x={x} y={289.5} color="#ffff00" />)}
    {range(988.7, 1180, 10.5).map((x) => <Plus key={x} x={x} y={338.5} color="#ffff00" />)}
    {[[1181, 334.5], [1185, 327.5], [1189.5, 319.5], [1193.5, 313.5], [1197.5, 307.5]].map(([x, y]) => (
      <Plus key={x} x={x} y={y} color="#ff00ff" />
    ))}

    <SvgText x={977} y={261} $size={12} $anchor="start">横向面筋</SvgText>
    <SvgText x={1025} y={261} $size={11} $anchor="start" $font={MONO} $color={GREEN}>XMJ</SvgText>
    <SvgText x={1108} y={261} $size={12} $anchor="start">纵向面筋</SvgText>
    <SvgText x={1157} y={261} $size={11} $anchor="start" $font={MONO} $color={GREEN}>YMJ</SvgText>
    <SvgText x={1002} y={317} $size={12} $anchor="start">横向底筋</SvgText>
    <SvgText x={1048} y={317} $size={11} $anchor="start" $font={MONO} $color={GREEN} textLength="43">C12@200</SvgText>
    <SvgText x={1079} y={324} $size={12} $anchor="start">纵向底筋</SvgText>
    <SvgText x={1134} y={324} $size={11} $anchor="start" $font={MONO} $color={GREEN} textLength="41">C12@200</SvgText>
    <SvgText x={1206.5} y={322} $size={11} $anchor="start" $font={MONO} $color={GREEN} textLength="43">C12@200</SvgText>
    <SvgText x={1208} y={281} $size={12} $color="#d8d8d8" transform="rotate(-54 1208 281)">节点设置</SvgText>
    <SvgText x={927} y={323} $size={12} $font={MONO} $color={GREEN} transform="rotate(-90 927 323)">500</SvgText>
    <SvgText x={980} y={301} $size={11} $font={MONO} $color={GREEN} transform="rotate(-90 980 301)">0</SvgText>
    <SvgText x={970} y={351} $size={11} $font={MONO} $color="#00b400" transform="rotate(-75 970 351)">60</SvgText>
    <SvgText x={1117} y={352} $size={12} $font={MONO} $color={GREEN} transform="rotate(-90 1117 352)">100</SvgText>
    <SvgText x={1083} y={479} $size={29} $weight={300}>全部翻起</SvgText>
    <SvgText x={1077} y={512} $size={31} $font={SERIF} textLength="42">1-1</SvgText>
    <path d="M1048 529.500h56" stroke="#fff" fill="none" />
  </Canvas>
);

/* ---------- data ---------- */
const TREE = [
  {
    label: "常用构件类型",
    open: true,
    items: [
      ["轴网", "(J)", "grid"],
      ["筏板基础", "(M)", "raft"],
      ["框柱", "(Z)", "column"],
      ["剪力墙", "(Q)", "wall"],
      ["梁", "(L)", "beam"],
      ["现浇板", "(B)", "slab"],
    ],
  },
  { label: "轴线" },
  { label: "柱" },
  { label: "墙" },
  { label: "门窗洞" },
  {
    label: "梁",
    open: true,
    items: [
      ["梁", "(L)", "beam"],
      ["圈梁", "(E)", "ring"],
    ],
  },
  { label: "板" },
  {
    label: "基础",
    open: true,
    items: [
      ["基础梁", "(F)", "fbeam"],
      ["筏板基础", "(M)", "raft"],
      ["集水坑", "(K)", "pit"],
      ["柱墩", "(Y)", "pier"],
      ["筏板主筋", "(R)", "rmain"],
      ["筏板负筋", "(X)", "rneg"],
      ["独立基础", "(P)", "iso"],
      ["条形基础", "(T)", "strip"],
      ["桩承台", "(V)", "cap", true],
      ["承台梁", "(F)", "fbeam"],
      ["桩", "(U)", "pile"],
      ["基础板带", "(W)", "band"],
    ],
  },
  { label: "其它" },
  { label: "自定义" },
];

const MENUS = [
  ["文件(F)", 0], ["编辑(E)", 10], ["楼层(L)", 10], ["构件(N)", 10], ["绘图(D)", 10], ["修改(M)", 11], ["钢筋量(Q)", 11],
  ["视图(V)", 10], ["工具(T)", 12], ["云应用(Y)", 10], ["BIM应用(I)", 11], ["在线服务(S)", 14], ["帮助(H)", 9], ["版本号(B)", 10],
];

const NavTree = () => (
  <Tree>
    {TREE.map((g) => (
      <TreeGroup key={g.label} $open={g.open}>
        <GroupRow>
          <Expander><Chevron open={g.open} /></Expander>
          <Dots />
          <Folder open={g.open} />
          <GroupLabel>{g.label}</GroupLabel>
        </GroupRow>
        {g.items &&
          g.items.map(([name, code, icon, selected], i) => (
            <ChildRow key={name + code} $last={i === g.items.length - 1}>
              <ChildBody $selected={selected}>
                <TreeIcon name={icon} />
                <span>{name}<Code>{code}</Code></span>
              </ChildBody>
            </ChildRow>
          ))}
      </TreeGroup>
    ))}
  </Tree>
);

const WinGlyphs = ({ color = "#555", restore }) => (
  <WinButtons>
    <WinButton>
      <svg width="10" height="10"><path d="M0 5.500h10" stroke={color} /></svg>
    </WinButton>
    <WinButton>
      <svg width="10" height="10">
        {restore ? (
          <path d="M2.500 2.500V.5h7v7h-2M.5 2.500h7v7h-7z" stroke={color} fill="none" />
        ) : (
          <rect x=".5" y=".5" width="9" height="9" stroke={color} fill="none" />
        )}
      </svg>
    </WinButton>
    <WinButton>
      <svg width="10" height="10"><path d="M0 0l10 10M10 0L0 10" stroke={color} /></svg>
    </WinButton>
  </WinButtons>
);

const App = () => (
  <Screen>
    <GlobalStyle />
    <TitleBar>
      <AppIcon size={14} />
      <TitleText>广联达BIM钢筋算量软件 GGJ2013 - [C:\Users\Administrator.PC-20141127NRHM\Desktop\白龙村-2016-08-25-13-27-07(2166版).GGJ12]</TitleText>
      <WinGlyphs color="#999" restore />
    </TitleBar>

    <MenuBar>
      {MENUS.map(([m, ml]) => (
        <MenuItem key={m} $ml={ml}>{m}</MenuItem>
      ))}
      <MenuItem $ml={8}>
        <svg width="16" height="18" viewBox="0 0 16 18">
          <path d="M2 1h8l4 4v12H2z" fill="#fff" stroke="#2b6fc0" />
          <path d="M9 10l4 4-4 4-4-4z" fill="#5aa632" />
        </svg>
        新建变更
      </MenuItem>
      <Caret $ml={6} />
      <MenuItem $ml={6}>
        <svg width="17" height="17" viewBox="0 0 17 17">
          <circle cx="8.500" cy="8" r="7" fill="#26a0e8" />
          <circle cx="6" cy="6.500" r="1.500" fill="#fff" />
          <circle cx="11" cy="6.500" r="1.500" fill="#fff" />
          <path d="M5 10.500c2 2 5 2 7 0" stroke="#fff" fill="none" />
        </svg>
        广小二
      </MenuItem>
      <MenuItem $ml={202}>
        <svg width="16" height="18" viewBox="0 0 16 18">
          <rect x="0" y="1" width="16" height="16" rx="2" fill="#3b91d3" />
          <circle cx="8" cy="7" r="3" fill="#fff" />
          <path d="M3 14c1-4 9-4 10 0z" fill="#fff" />
        </svg>
        13907298339
      </MenuItem>
      <Caret $ml={7} />
      <MenuItem $ml={12}>造价豆:0</MenuItem>
      <MenuItem $ml={8}>
        <svg width="14" height="18" viewBox="0 0 14 18">
          <path d="M7 1c3 0 4 3 4 6s1 5 3 7H0c2-2 3-4 3-7s1-6 4-6z" fill="#2f80e0" />
          <circle cx="7" cy="16" r="1.800" fill="#2f80e0" />
        </svg>
      </MenuItem>
      <More $ml={36}>»</More>
    </MenuBar>

    <ToolBar>
      <ToolBand $w={148} $pad={5}>
        <svg width="12" height="15" viewBox="0 0 12 15"><path d="M.5.5h7l4 4v10H.5z" fill="#fff" stroke="#666" /></svg>
        <ToolItem $ml={10}>
          <svg width="17" height="15" viewBox="0 0 17 15">
            <path d="M.5 14V2h5l1 2h6v3" fill="#f6e6b0" stroke="#a08a4a" />
            <path d="M3 7h13l-3 7H.5z" fill="#eec85e" stroke="#a08a4a" />
          </svg>
        </ToolItem>
        <Caret $ml={4} />
        <ToolItem $ml={8}>
          <svg width="15" height="15" viewBox="0 0 15 15">
            <rect x=".5" y=".5" width="14" height="14" fill="#3f62b8" stroke="#223b80" />
            <rect x="3" y="1" width="9" height="5" fill="#fff" />
            <rect x="4" y="9" width="7" height="5" fill="#c4cde8" />
          </svg>
        </ToolItem>
        <ToolSep $ml={6} />
        <ToolItem $ml={7}>
          <svg width="16" height="15" viewBox="0 0 16 15">
            <path d="M4 2v5h5" fill="none" stroke="#2a66c0" strokeWidth="2" />
            <path d="M4 7c2-4 8-4 9 0s-2 6-4 7" fill="none" stroke="#2a66c0" strokeWidth="2.4" />
          </svg>
        </ToolItem>
        <Caret $ml={7} />
        <More $ml={22}>»</More>
      </ToolBand>
      <ToolBand $w={546} $pad={6}>
        <ToolItem $gap={2}><ToolIcon name="pen" />绘图</ToolItem>
        <ToolItem $ml={8} $gap={9}>
          <Sigma>Σ</Sigma>
          汇总计算
        </ToolItem>
        <ToolItem $ml={8}><ToolIcon name="cloud" />云检查</ToolItem>
        <ToolItem $ml={6} $off><ToolIcon name="level" />平齐板顶</ToolItem>
        <ToolItem $ml={6} $off><ToolIcon name="find" />查找图元</ToolItem>
        <ToolItem $ml={2} $off><ToolIcon name="glasses" w={21} />查看钢筋量</ToolItem>
        <ToolItem $ml={8} $off><ToolIcon name="batch" w={18} />批量选择</ToolItem>
        <More $ml={38}>»</More>
      </ToolBand>
      <ToolBand $w={658} $pad={3}>
        <Combo>
          <ComboSwatch />
          二维
          <Caret $ml={3} $color="#666" />
        </Combo>
        <ToolItem $ml={3} $off><ToolIcon name="box" />俯视</ToolItem>
        <Caret $ml={8} $color="#666" />
        <ToolItem $ml={6} $off><ToolIcon name="orbit" />动态观察</ToolItem>
        <ToolItem $ml={7} $off><ToolIcon name="local" />局部三维</ToolItem>
        <ToolSep $ml={7} />
        <ToolItem $ml={5} $off><ToolIcon name="zoomAll" />全屏</ToolItem>
        <ToolItem $ml={8} $off><ToolIcon name="zoom" />缩放</ToolItem>
        <Caret $ml={7} $color="#666" />
        <ToolItem $ml={6} $off><ToolIcon name="pan" />平移</ToolItem>
        <Caret $ml={6} $color="#666" />
        <ToolItem $ml={6} $off><ToolIcon name="rotate" />屏幕旋转</ToolItem>
        <Caret $ml={3} $color="#666" />
        <ToolSep $ml={5} />
        <ToolItem $ml={7} $off><ToolIcon name="floors" w={15} />选择楼层</ToolItem>
        <More $ml={29}>»</More>
      </ToolBand>
    </ToolBar>

    <Main>
      <Nav>
        <NavTitle>
          <NavTitleText>模块导航栏</NavTitleText>
          <svg width="10" height="12" viewBox="0 0 10 12"><path d="M3 1h4v5l1.500 1.500h-7L3 6zM5 7.500V12" stroke="#222" fill="none" /></svg>
          <svg width="9" height="9" viewBox="0 0 9 9"><path d="M0 0l9 9M9 0L0 9" stroke="#222" /></svg>
        </NavTitle>
        <NavButton>工程设置</NavButton>
        <NavButton>绘图输入</NavButton>
        <TreeTools>
          <svg width="17" height="16" viewBox="0 0 17 16"><path d="M0 5h8M4 1v8M8 11h9M12.500 7v9" stroke="#0d6e66" strokeWidth="2.200" /></svg>
          <svg width="17" height="16" viewBox="0 0 17 16"><path d="M0 5h8M8 11h9" stroke="#0d6e66" strokeWidth="2.200" /></svg>
        </TreeTools>
        <NavTree />
        <NavButton>单构件输入</NavButton>
        <NavButton $mt={1}>报表预览</NavButton>
      </Nav>
      <Work>
        <TabStrip>
          {["#f2d25a", "#a9c2df", "#cfe3f8", "#e8c86a", "#a9c2df", "#cfe3f8", "#a9c2df", "#cfe3f8", "#a9c2df", "#e8c86a", "#cfe3f8", "#a9c2df"].map((c, i) => (
            <TabIcon key={i} $color={c} />
          ))}
        </TabStrip>
        <Panes>
          <ListPane>
            <SearchBox>搜索</SearchBox>
            <ListBody><Chevron open /></ListBody>
          </ListPane>
          <ViewPane>
            <ViewRule />
            <ViewInner />
          </ViewPane>
        </Panes>
      </Work>
    </Main>

    <StatusBar>
      <StatusCell $w={149} />
      <StatusCell $w={78}>层高<Code>:3.55m</Code></StatusCell>
      <StatusCell $w={98}>底标高<Code>:-3.58m</Code></StatusCell>
      <StatusCell $w={47}><Code>0</Code></StatusCell>
      <StatusCell $grow>名称在当前层当前构件类型下不允许重名</StatusCell>
      <StatusCell $w={69}><Code>266.7 FPS</Code></StatusCell>
    </StatusBar>

    <TaskBar>
      <StartButton>
        <svg width="16" height="16" viewBox="0 0 16 16">
          <path d="M0 2.300l6.500-.9v6.200H0zM7.300 1.300L16 0v7.600H7.300zM0 8.400h6.500v6.200L0 13.700zM7.300 8.400H16V16l-8.700-1.300z" fill="#fff" />
        </svg>
      </StartButton>
      <SearchPill>
        <svg width="22" height="22" viewBox="0 0 22 22"><circle cx="11" cy="11" r="8.500" stroke="#e8e8e8" strokeWidth="2.400" fill="none" /></svg>
        <SearchHint>在这里输入你要搜索的内容</SearchHint>
        <svg width="12" height="18" viewBox="0 0 12 18"><rect x="3.500" y="1" width="5" height="10" rx="2.500" stroke="#999" fill="none" /><path d="M1 8c0 6 10 6 10 0M6 13v4M3 17h6" stroke="#999" fill="none" /></svg>
      </SearchPill>
      <TaskIcons>
        <TaskSlot $w={50}>
          <svg width="22" height="24" viewBox="0 0 22 24">
            <path d="M11 12C7 2 14 0 18 2s2 9-7 10zM11 12c10-3 12 3 9 7s-9 3-9-7zM11 12c4 10-3 12-7 10s-2-9 7-10zM11 12C1 15-1 9 2 5s9-3 9 7z" fill="#d8d8d8" />
          </svg>
        </TaskSlot>
        <TaskSlot $w={54}>
          <svg width="26" height="24" viewBox="0 0 26 24">
            <circle cx="10" cy="13" r="8" fill="none" stroke="#ccc" strokeWidth="1.600" />
            <circle cx="11" cy="14" r="4" fill="none" stroke="#ccc" strokeWidth="1.600" />
            <path d="M19 1c3 0 3 3 3 5s1 3 2 4h-10c1-1 2-2 2-4s0-5 3-5z" fill="#f5b324" />
          </svg>
        </TaskSlot>
        <TaskSlot $w={48}>
          <svg width="24" height="24" viewBox="0 0 24 24">
            <path d="M3 12C4 5 9 2 13 2c6 0 9 5 9 11H9c0 5 7 6 12 3v5c-6 3-17 2-17-7 0-2 1-4 3-5-1 1-2 2-2 4h11c0-5-8-6-13-1z" fill="#0d7fd6" />
          </svg>
        </TaskSlot>
        <TaskSlot $w={50}>
          <svg width="20" height="24" viewBox="0 0 20 24">
            <path d="M1 6h18v17H1z" fill="#fff" />
            <path d="M6 6V3c0-3 8-3 8 0v3" stroke="#fff" fill="none" strokeWidth="1.500" />
            <path d="M5.500 10h4v4h-4zM10.500 10h4v4h-4zM5.500 15h4v4h-4zM10.500 15h4v4h-4z" fill="#111" />
          </svg>
        </TaskSlot>
        <TaskSlot $w={46}>
          <svg width="22" height="22" viewBox="0 0 22 22">
            <path d="M0 2h8l2 2h12v16H0z" fill="#f5d76e" />
            <rect x="7" y="13" width="8" height="4" fill="#38a0e0" />
            <rect x="5" y="16" width="12" height="4" fill="#2b80c8" />
          </svg>
        </TaskSlot>
        <TaskSlot $w={40} $ml={8} $run>
          <svg width="24" height="26" viewBox="0 0 24 26">
            <path d="M21 5C14-1 3 2 2 11c-1 7 5 13 12 12" fill="none" stroke="#2f8fe0" strokeWidth="4" />
            <path d="M6 9l12 12" stroke="#e05060" strokeWidth="5" />
          </svg>
        </TaskSlot>
        <TaskSlot $w={41} $ml={7} $run>
          <svg width="24" height="26" viewBox="0 0 24 26">
            <path d="M21 5C14-1 4 3 3 11c-1 7 4 13 11 12 5-1 7-6 6-10h-8" fill="none" stroke="#1d8be6" strokeWidth="4.500" />
          </svg>
        </TaskSlot>
        <TaskSlot $w={40} $ml={9} $run>
          <svg width="24" height="24" viewBox="0 0 24 24">
            <circle cx="12" cy="13" r="10" fill="#8cc63f" stroke="#d8e8c8" />
            <path d="M5 13h14M8 9a6 6 0 0 1 8 0" stroke="#fff" strokeWidth="2" fill="none" />
            <path d="M14 3c2-2 4-2 6-1" stroke="#4a8a20" strokeWidth="2" fill="none" />
          </svg>
        </TaskSlot>
        <TaskSlot $w={48} $ml={5} $run $active><AppIcon size={24} /></TaskSlot>
      </TaskIcons>
      <Tray>
        <Stacked $w={72} $mr={9}>26%<br />CPU使用</Stacked>
        <TrayIcon $w={16}>
          <svg width="12" height="7" viewBox="0 0 12 7"><path d="M.5 6.500L6 1l5.500 5.500" stroke="#fff" fill="none" /></svg>
        </TrayIcon>
        <TrayIcon $w={24}>
          <svg width="16" height="12" viewBox="0 0 16 12"><path d="M3 2h12v9H3z" fill="none" stroke="#fff" /><path d="M5 4h8v5H5zM0 4h3M0 7h3" fill="#fff" stroke="#fff" /></svg>
        </TrayIcon>
        <TrayIcon $w={26}>
          <svg width="14" height="14" viewBox="0 0 14 14"><path d="M1 13a12 12 0 0 1 12-12M4 13a9 9 0 0 1 9-9M7 13a6 6 0 0 1 6-6" stroke="#bbb" fill="none" strokeDasharray="2 1" /></svg>
        </TrayIcon>
        <TrayIcon $w={22}>
          <svg width="15" height="14" viewBox="0 0 15 14"><path d="M1 5h3l3-3v10L4 9H1zM9 4a4 4 0 0 1 0 6M11 2a7 7 0 0 1 0 10" stroke="#fff" fill="none" /></svg>
        </TrayIcon>
        <TrayIcon $w={22} $size={14}>中</TrayIcon>
        <TrayIcon $w={36}>
          <svg width="17" height="21" viewBox="0 0 17 21">
            <path d="M1 3l15-3 1 18-15 3z" fill="#e64a19" />
            <path d="M12 7c-2-2-6-1-6 1s6 2 6 5-5 3-7 1" stroke="#fff" strokeWidth="2" fill="none" />
          </svg>
        </TrayIcon>
        <Stacked $w={62} $ml={13} $size={13}>9:16<br />2017/6/16</Stacked>
        <BadgeWrap>
          <svg width="16" height="15" viewBox="0 0 16 15"><path d="M0 0h16v12H7l-3 3v-3H0z" fill="#fff" /><path d="M3 3h10M3 6h10M3 9h7" stroke="#222" /></svg>
          <CountBadge>6</CountBadge>
        </BadgeWrap>
      </Tray>
    </TaskBar>

    <GreenBall>66</GreenBall>
    <SogouBar>
      中
      <SogouMarks>°,</SogouMarks>
      <svg width="12" height="17" viewBox="0 0 12 17"><rect x="3" y="0" width="6" height="11" rx="3" fill="#1273c9" /><path d="M1 7c0 6 10 6 10 0M6 13v4" stroke="#1273c9" strokeWidth="1.500" fill="none" /></svg>
      <svg width="16" height="13" viewBox="0 0 16 13"><rect x=".5" y=".5" width="15" height="12" rx="1.500" fill="#1273c9" /><path d="M2 3h12M2 6h12" stroke="#fff" strokeDasharray="1 1" /><path d="M4 9.500h8" stroke="#fff" /></svg>
      <svg width="14" height="14" viewBox="0 0 14 14"><circle cx="6" cy="4" r="3" fill="#a8b4c2" /><path d="M0 13c0-6 10-6 10 0z" fill="#a8b4c2" /><rect x="7" y="8" width="7" height="6" fill="#c6d0da" /></svg>
      <svg width="14" height="14" viewBox="0 0 14 14"><path d="M4 0H1L0 5h3v9h8V5h3l-1-5h-3a3 3 0 0 1-6 0z" fill="#1273c9" /></svg>
      <svg width="14" height="15" viewBox="0 0 14 15"><path d="M1 14L8 6a4 4 0 0 1 5-5l-2.500 3 2 2 3-2a4 4 0 0 1-6 4l-6 7z" fill="#1273c9" /></svg>
    </SogouBar>
    <SogouLogo width="27" height="26" viewBox="0 0 27 26">
      <path d="M1 5L25 0l2 21-24 5z" fill="#f04e1c" />
      <path d="M20 8c-3-3-11-2-11 2s10 2 10 6-8 5-12 2" stroke="#fff" strokeWidth="3.400" fill="none" strokeLinecap="round" />
    </SogouLogo>

    <Dialog>
      <DialogTitle>
        <AppIcon />
        <DialogTitleText>参数化选择</DialogTitleText>
        <WinGlyphs color="#222" />
      </DialogTitle>
      <DialogBody>
        <Shapes>
          <ShapeFrame>
            <ShapeCaption>图形</ShapeCaption>
            <CardGrid>
              {CARDS.map((c, i) => (
                <Card key={i} $selected={i === 0}>{c}</Card>
              ))}
              <Card /><Card />
            </CardGrid>
            <ScrollBar>
              <ScrollArrow>
                <svg width="9" height="6" viewBox="0 0 9 6"><path d="M1 5l3.500-3.500L8 5" stroke="#555" strokeWidth="1.600" fill="none" /></svg>
              </ScrollArrow>
              <ScrollThumb />
              <ScrollGap />
              <ScrollArrow>
                <svg width="9" height="6" viewBox="0 0 9 6"><path d="M1 1l3.500 3.500L8 1" stroke="#555" strokeWidth="1.600" fill="none" /></svg>
              </ScrollArrow>
            </ScrollBar>
          </ShapeFrame>
        </Shapes>
        <Preview>
          <RadioBar>
            <RadioLabel><RadioDot $on />角度放坡形式</RadioLabel>
            <RadioLabel><RadioDot />底宽放坡形式</RadioLabel>
          </RadioBar>
          <PreviewDrawing />
        </Preview>
      </DialogBody>
      <DialogFooter>
        <DialogButton $primary>配筋形式</DialogButton>
        <DialogButton $ml={335}>确定</DialogButton>
        <DialogButton $ml={15}>取消</DialogButton>
      </DialogFooter>
    </Dialog>
  </Screen>
);

export default App;
